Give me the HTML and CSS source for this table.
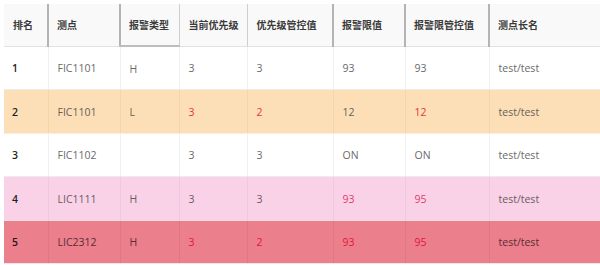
FILE: index.html
```html
<!DOCTYPE html>
<html lang="zh">
<head>
<meta charset="utf-8">
<link rel="stylesheet" href="styles.css">
</head>
<body>
<table class="grid">
  <colgroup>
    <col class="c1"><col class="c2"><col class="c3"><col class="c4"><col class="c5"><col class="c6"><col class="c7"><col class="c8">
  </colgroup>
  <thead>
    <tr>
      <th class="first">排名</th><th class="dark">测点</th><th class="dark pressed">报警类型</th><th>当前优先级</th><th>优先级管控值</th><th class="dark">报警限值</th><th class="dark">报警限管控值</th><th class="dark">测点长名</th>
    </tr>
  </thead>
  <tbody>
    <tr>
      <td class="rank">1</td><td>FIC1101</td><td>H</td><td>3</td><td>3</td><td>93</td><td>93</td><td>test/test</td>
    </tr>
    <tr class="peach">
      <td class="rank">2</td><td>FIC1101</td><td>L</td><td class="red">3</td><td class="red">2</td><td>12</td><td class="red">12</td><td>test/test</td>
    </tr>
    <tr>
      <td class="rank">3</td><td>FIC1102</td><td></td><td>3</td><td>3</td><td>ON</td><td>ON</td><td>test/test</td>
    </tr>
    <tr class="pink">
      <td class="rank">4</td><td>LIC1111</td><td>H</td><td>3</td><td>3</td><td class="red">93</td><td class="red">95</td><td>test/test</td>
    </tr>
    <tr class="rose">
      <td class="rank">5</td><td>LIC2312</td><td>H</td><td class="red">3</td><td class="red">2</td><td class="red">93</td><td class="red">95</td><td>test/test</td>
    </tr>
  </tbody>
</table>
</body>
</html>
```

FILE: styles.css
```css
html, body {
  margin: 0;
  padding: 0;
  background: #ffffff;
}
body {
  padding: 4px 0 0 4px;
  font-family: "Open Sans", "Noto Sans CJK SC", sans-serif;
}
.grid {
  border-collapse: collapse;
  table-layout: fixed;
  width: 600px;
}
.c1 { width: 44px; }
.c2 { width: 72px; }
.c3 { width: 59px; }
.c4 { width: 68px; }
.c5 { width: 86px; }
.c6 { width: 72px; }
.c7 { width: 84px; }
.c8 { width: 115px; }

th {
  height: 42px;
  padding: 0 0 0 9px;
  text-align: left;
  font-family: "Noto Sans CJK SC", sans-serif;
  font-size: 10px;
  font-weight: 700;
  color: #3a3a3a;
  background: #f9f9f9;
  border-left: 1px solid #cfcfcf;
  border-bottom: 1px solid #e2e2e2;
  white-space: nowrap;
  box-sizing: border-box;
}
th.first { border-left: none; }
th.dark { border-left: 2px solid #b4b4b4; padding-left: 8px; }
th.pressed { border-bottom: 2px solid #bdbdbd; }

td {
  height: 43.5px;
  padding: 1px 0 0 9px;
  font-size: 10.5px;
  color: #6a6a6a;
  border-left: 1px solid #f0f0f0;
  border-bottom: 1px solid #ececec;
  white-space: nowrap;
  box-sizing: border-box;
}
td:first-child { border-left: none; }
td.rank {
  color: #1f1f1f;
  font-weight: 600;
  padding-left: 8px;
}
td.red { color: #e43a3a; }

tr.peach td { background: #fcdfb7; border-left-color: #f4d4ab; border-bottom-color: #f6efe6; color: #675f57; }
tr.peach td.rank { color: #1f1f1f; }
tr.peach td.red { color: #ea3434; }

tr.pink td { background: #f9d2e7; border-left-color: #efc8dc; border-bottom-color: #e6e0e2; color: #6b5b64; }
tr.pink td.rank { color: #1f1f1f; }
tr.pink td.red { color: #e23c68; }

tr.rose td { background: #eb7f8b; border-left-color: #e07783; border-bottom-color: #f3e6e8; color: #5c2c38; }
tr.rose td.rank { color: #2a1519; }
tr.rose td.red { color: #e4163a; }
```
